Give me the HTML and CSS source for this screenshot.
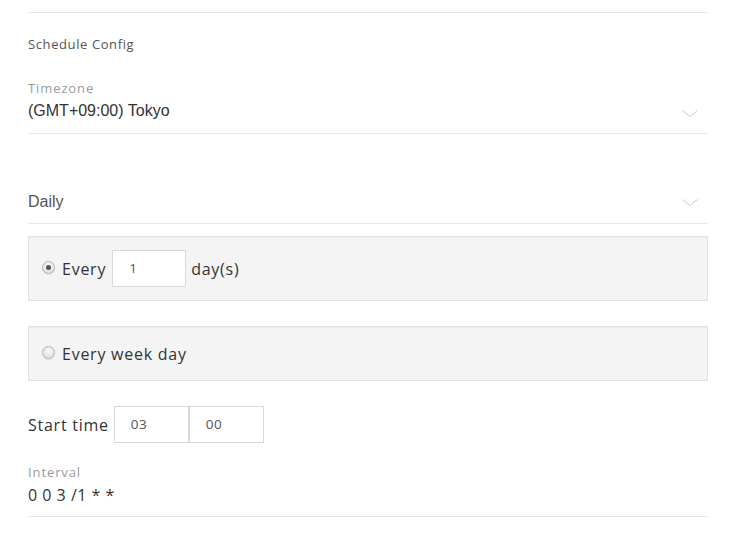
FILE: index.html
```html
<!DOCTYPE html>
<html>
<head>
<meta charset="utf-8">
<link rel="stylesheet" href="styles.css">
</head>
<body>
<div class="panel">
  <div class="topline"></div>
  <div class="section-title">Schedule Config</div>
  <div class="field">
    <div class="field-label">Timezone</div>
    <div class="select-row">
      <span class="select-value">(GMT+09:00) Tokyo</span>
      <svg class="chev" width="16" height="7" viewBox="0 0 16 7"><path d="M0.5 0.5 L8 6.5 L15.5 0.5" fill="none" stroke="#c9c9d8" stroke-width="1"/></svg>
    </div>
  </div>
  <div class="field daily">
    <div class="select-row">
      <span class="select-value dim">Daily</span>
      <svg class="chev" width="16" height="7" viewBox="0 0 16 7"><path d="M0.5 0.5 L8 6.5 L15.5 0.5" fill="none" stroke="#c9c9d8" stroke-width="1"/></svg>
    </div>
  </div>
  <div class="option opt1">
    <span class="radio checked"></span>
    <span class="opt-text">Every</span>
    <div class="tbox">1</div>
    <span class="opt-text">day(s)</span>
  </div>
  <div class="option opt2">
    <span class="radio"></span>
    <span class="opt-text">Every week day</span>
  </div>
  <div class="start">
    <span class="opt-text">Start time</span>
    <div class="tbox">03</div>
    <div class="tbox second">00</div>
  </div>
  <div class="interval">
    <div class="field-label">Interval</div>
    <div class="interval-value">0 0 3 /1 * *</div>
  </div>
</div>
</body>
</html>
```

FILE: styles.css
```css
html, body {
  margin: 0;
  padding: 0;
  background: #fff;
}
body {
  font-family: "Open Sans", "Liberation Sans", sans-serif;
  color: #333;
}
.panel {
  width: 680px;
  margin-left: 28px;
  padding-top: 12px;
}
.topline {
  height: 1px;
  background: #e6e6e6;
}
.section-title {
  font-size: 13px;
  letter-spacing: 0.6px;
  color: #555;
  margin-top: 23px;
  line-height: 16px;
}
.field {
  border-bottom: 1px solid #e6e6e6;
}
.field-label {
  font-size: 13px;
  letter-spacing: 0.9px;
  color: #9a9a9a;
  line-height: 16px;
  margin-top: 28px;
}
.select-row {
  display: flex;
  justify-content: space-between;
  align-items: flex-start;
  height: 37px;
}
.select-value {
  font-family: "Liberation Sans", Arial, sans-serif;
  font-size: 16px;
  line-height: 22px;
  margin-top: 4px;
  color: #333;
}
.select-value.dim {
  color: #555;
}
.chev {
  margin-right: 10px;
  margin-top: 14px;
}
.daily {
  margin-top: 57px;
}
.daily .select-row {
  height: 32px;
}
.daily .select-value {
  margin-top: 0;
}
.daily .chev {
  margin-top: 8px;
}
.option {
  display: flex;
  align-items: center;
  background: #f4f4f4;
  border: 1px solid #e2e2e2;
  box-shadow: inset 0 1px 1px rgba(0,0,0,0.04);
  padding-left: 13px;
}
.opt1 {
  margin-top: 12px;
  height: 63px;
}
.opt2 {
  margin-top: 25px;
  height: 53px;
}
.radio {
  width: 11px;
  height: 11px;
  border-radius: 50%;
  border: 1px solid #b5b5b5;
  background: radial-gradient(circle at 50% 35%, #f9f9f9 0%, #d8d8d8 100%);
  box-shadow: 0 1px 1px rgba(0,0,0,0.08);
  margin-right: 7px;
  position: relative;
  margin-top: -3px;
}
.radio.checked::after {
  content: "";
  position: absolute;
  left: 3px;
  top: 3px;
  width: 5px;
  height: 5px;
  border-radius: 50%;
  background: #555;
}
.opt-text {
  font-size: 16px;
  letter-spacing: 0.75px;
  color: #333;
}
.tbox {
  width: 72px;
  height: 35px;
  border: 1px solid #d9d9d9;
  background: #fff;
  font-size: 13.5px;
  letter-spacing: 0.4px;
  color: #555;
  line-height: 35px;
  text-indent: 16px;
}
.opt1 .tbox {
  margin: 0 5px 0 6px;
}
.start {
  display: flex;
  align-items: center;
  margin-top: 25px;
}
.start .tbox {
  margin-left: 5px;
  width: 73px;
}
.start .tbox.second {
  margin-left: 0;
}
.interval {
  border-bottom: 1px solid #e6e6e6;
  padding-bottom: 10px;
}
.interval .field-label {
  margin-top: 21px;
}
.interval-value {
  font-size: 16px;
  letter-spacing: 0.5px;
  color: #333;
  line-height: 22px;
  margin-top: 4px;
}
```
